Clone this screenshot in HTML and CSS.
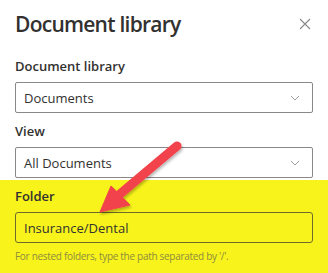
FILE: index.html
```html
<!DOCTYPE html>
<html lang="en">
<head>
    <meta charset="UTF-8">
    <title>Document library</title>
    <link rel="stylesheet" href="styles.css">
</head>
<body>

<div class="panel">
    <div class="panel-header">
        <h1>Document library</h1>
        <button class="close-btn" aria-label="Close">
            <svg width="12" height="12" viewBox="0 0 12 12"><path d="M1 1L11 11M11 1L1 11" stroke="#8a8886" stroke-width="1.1" fill="none"/></svg>
        </button>
    </div>

    <div class="field">
        <label class="field-label">Document library</label>
        <div class="dropdown">
            <span>Documents</span>
            <svg class="chevron" width="10" height="6" viewBox="0 0 10 6"><path d="M1 1L5 5L9 1" stroke="#a19f9d" stroke-width="1" fill="none"/></svg>
        </div>
    </div>

    <div class="field">
        <label class="field-label">View</label>
        <div class="dropdown">
            <span>All Documents</span>
            <svg class="chevron" width="10" height="6" viewBox="0 0 10 6"><path d="M1 1L5 5L9 1" stroke="#a19f9d" stroke-width="1" fill="none"/></svg>
        </div>
    </div>

    <div class="highlight">
        <div class="field">
            <label class="field-label">Folder</label>
            <div class="textbox">Insurance/Dental</div>
            <p class="hint">For nested folders, type the path separated by '/'.</p>
        </div>
    </div>

    <!-- annotation arrow drawn on top of the form -->
    <svg class="arrow" width="328" height="273" viewBox="0 0 328 273">
        <defs>
            <filter id="shadow" x="-20%" y="-20%" width="140%" height="140%">
                <feDropShadow dx="1" dy="2" stdDeviation="1.5" flood-color="#000" flood-opacity="0.3"/>
            </filter>
        </defs>
        <g filter="url(#shadow)" fill="#f2434b" stroke="#f2434b">
            <line x1="177" y1="146" x2="120" y2="194" stroke-width="9" stroke-linecap="round"/>
            <polygon points="100,212 111,186 130,205" stroke-width="1" stroke-linejoin="round"/>
        </g>
    </svg>
</div>

</body>
</html>
```

FILE: styles.css
```css
body {
    margin: 0;
    font-family: "Segoe UI", "Open Sans", sans-serif;
    background-color: #fff;
    color: #323130;
}

.panel {
    position: relative;
    width: 328px;
    height: 273px;
    overflow: hidden;
}

.panel-header {
    display: flex;
    justify-content: space-between;
    align-items: center;
    padding: 8px 17px 0 15px;
    height: 32px;
}

.panel-header h1 {
    margin: 0;
    font-size: 21px;
    font-weight: 600;
    letter-spacing: -0.75px;
}

.close-btn {
    background: none;
    border: none;
    padding: 0;
    display: flex;
}

.field {
    padding: 0 15px;
}

.field-label {
    display: block;
    font-size: 13px;
    font-weight: 600;
    line-height: 20px;
    padding: 6px 0;
}

.panel-header + .field {
    margin-top: 10px;
}

.dropdown,
.textbox {
    display: flex;
    align-items: center;
    justify-content: space-between;
    box-sizing: border-box;
    height: 31px;
    padding: 0 10px 0 8px;
    border: 1px solid #8a8886;
    border-radius: 2px;
    font-size: 13px;
    margin-bottom: 2px;
}

.chevron {
    margin-right: 2px;
}

.highlight {
    background-color: #f8f41b;
    margin-top: 1px;
    height: 100px;
}

.highlight .textbox {
    border-color: #6d6a2c;
    border-radius: 3px;
}

.hint {
    margin: 6px 0 0;
    font-size: 10px;
    letter-spacing: -0.3px;
    color: #8e8b3e;
}

.arrow {
    position: absolute;
    left: 0;
    top: 0;
    pointer-events: none;
}
```
